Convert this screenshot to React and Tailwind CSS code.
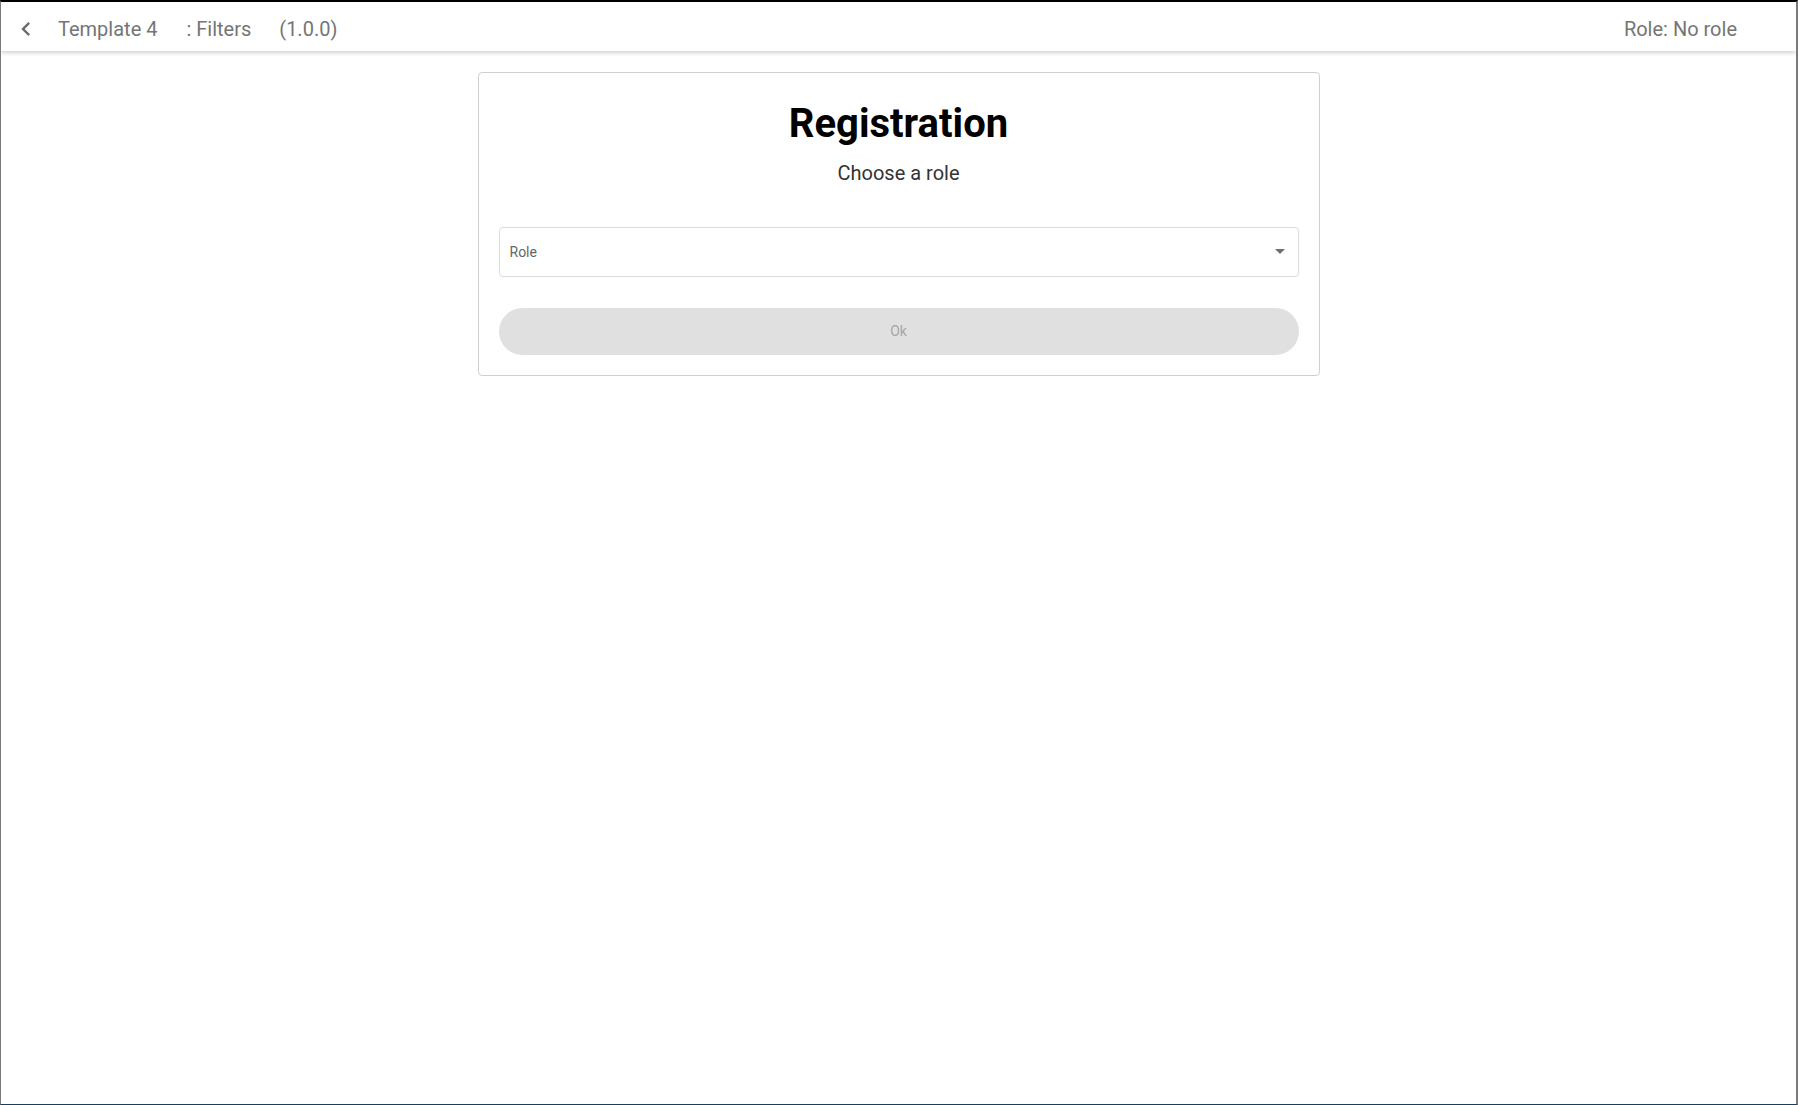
import React from "react";

function ChevronLeft() {
  return (
    <svg width="28" height="28" viewBox="0 0 24 24" fill="#6b6b6b">
      <path d="M15.41 7.41L14 6l-6 6 6 6 1.41-1.41L10.83 12z" />
    </svg>
  );
}

export default function App() {
  return (
    <div
      className="h-[1105px] w-full box-border border-t-2 border-t-black border-l border-l-[#7a7a7a] border-r-2 border-r-[#7a7a7a] border-b border-b-[#1c3d5a] bg-white flex flex-col overflow-hidden"
      style={{ fontFamily: "Roboto, 'Noto Sans', sans-serif" }}
    >
      <header className="h-[49px] shrink-0 flex items-start bg-white shadow-[0_2px_4px_rgba(0,0,0,0.18)] relative z-10">
        <div className="ml-[11px] mt-[13px] w-[28px] h-[28px] flex items-center justify-center">
          <ChevronLeft />
        </div>
        <div className="flex items-start pt-[15px] text-[20px] leading-[24px] text-[#757575]">
          <span className="ml-[18px]">Template 4</span>
          <span className="ml-[29px]">: Filters</span>
          <span className="ml-[28px]">(1.0.0)</span>
        </div>
        <div className="ml-auto mr-[59px] pt-[15px] text-[20px] leading-[24px] text-[#757575]">
          Role: No role
        </div>
      </header>

      <main className="flex-1 flex justify-center pt-[21px]">
        <div className="w-[842px] h-[304px] box-border border border-[#cfcfcf] rounded-[4px] px-[20px] pt-[27px] pb-[19px] flex flex-col items-stretch">
          <h1 className="text-center text-[40px] leading-[48px] font-bold text-black">
            Registration
          </h1>
          <p className="mt-[10px] text-center text-[20px] leading-[30px] text-[#333333]">
            Choose a role
          </p>
          <div className="mt-[39px] h-[50px] box-border border border-[#dcdcdc] rounded-[4px] flex items-center pl-[10px] pr-[13px]">
            <span className="text-[14px] text-[#666666] mt-[1px]">Role</span>
            <svg className="ml-auto" width="10" height="6" viewBox="0 0 10 6">
              <path d="M0 0 L10 0 L5 5 Z" fill="#707070" />
            </svg>
          </div>
          <button
            disabled
            className="mt-[31px] h-[47px] w-full rounded-full bg-[#e0e0e0] text-[14px] text-[#a6a6a6] flex items-center justify-center"
          >
            Ok
          </button>
        </div>
      </main>
    </div>
  );
}
